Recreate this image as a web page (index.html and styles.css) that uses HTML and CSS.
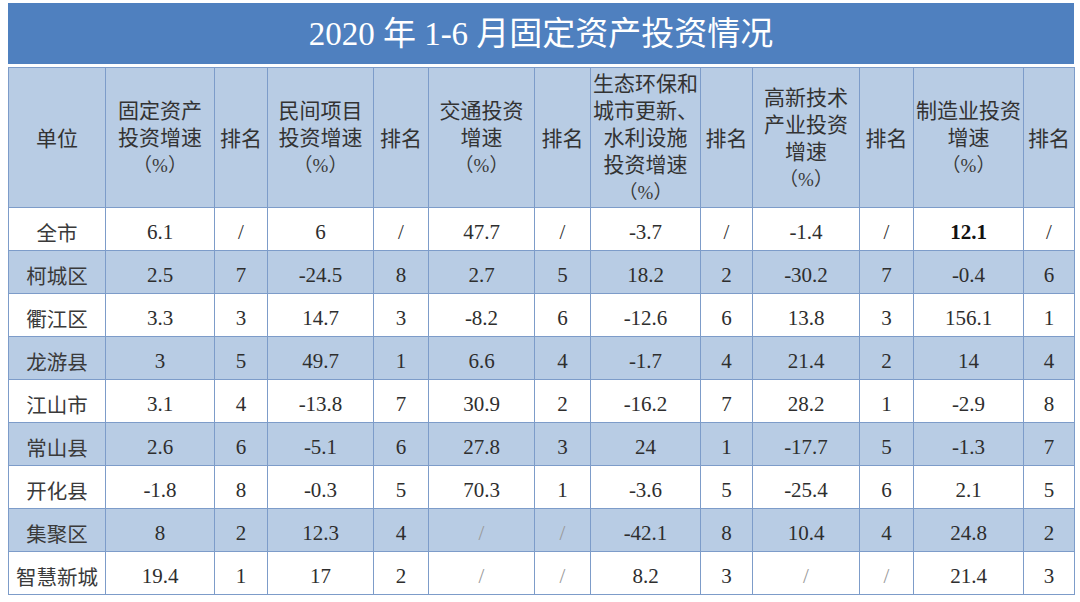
FILE: index.html
```html
<!DOCTYPE html>
<html lang="zh-CN">
<head>
<meta charset="utf-8">
<title>2020 年 1-6 月固定资产投资情况</title>
<link rel="stylesheet" href="styles.css">
</head>
<body>
<div class="sheet">
  <div class="title">2020 年 1-6 月固定资产投资情况</div>
  <table class="grid">
    <colgroup>
      <col class="c-unit"><col class="c-v1"><col class="c-r1"><col class="c-v2"><col class="c-r2"><col class="c-v3"><col class="c-r3"><col class="c-v4"><col class="c-r4"><col class="c-v5"><col class="c-r5"><col class="c-v6"><col class="c-r6">
    </colgroup>
    <thead>
      <tr class="head">
        <th>单位</th>
        <th>固定资产<br>投资增速<br><span class="pct">（%）</span></th>
        <th>排名</th>
        <th>民间项目<br>投资增速<br><span class="pct">（%）</span></th>
        <th>排名</th>
        <th>交通投资<br>增速<br><span class="pct">（%）</span></th>
        <th>排名</th>
        <th>生态环保和<br>城市更新、<br>水利设施<br>投资增速<br><span class="pct">（%）</span></th>
        <th>排名</th>
        <th>高新技术<br>产业投资<br>增速<br><span class="pct">（%）</span></th>
        <th>排名</th>
        <th>制造业投资<br>增速<br><span class="pct">（%）</span></th>
        <th>排名</th>
      </tr>
    </thead>
    <tbody>
      <tr><td class="name">全市</td><td>6.1</td><td>/</td><td>6</td><td>/</td><td>47.7</td><td>/</td><td>-3.7</td><td>/</td><td>-1.4</td><td>/</td><td class="bold">12.1</td><td>/</td></tr>
      <tr class="alt"><td class="name">柯城区</td><td>2.5</td><td>7</td><td>-24.5</td><td>8</td><td>2.7</td><td>5</td><td>18.2</td><td>2</td><td>-30.2</td><td>7</td><td>-0.4</td><td>6</td></tr>
      <tr><td class="name">衢江区</td><td>3.3</td><td>3</td><td>14.7</td><td>3</td><td>-8.2</td><td>6</td><td>-12.6</td><td>6</td><td>13.8</td><td>3</td><td>156.1</td><td>1</td></tr>
      <tr class="alt"><td class="name">龙游县</td><td>3</td><td>5</td><td>49.7</td><td>1</td><td>6.6</td><td>4</td><td>-1.7</td><td>4</td><td>21.4</td><td>2</td><td>14</td><td>4</td></tr>
      <tr><td class="name">江山市</td><td>3.1</td><td>4</td><td>-13.8</td><td>7</td><td>30.9</td><td>2</td><td>-16.2</td><td>7</td><td>28.2</td><td>1</td><td>-2.9</td><td>8</td></tr>
      <tr class="alt"><td class="name">常山县</td><td>2.6</td><td>6</td><td>-5.1</td><td>6</td><td>27.8</td><td>3</td><td>24</td><td>1</td><td>-17.7</td><td>5</td><td>-1.3</td><td>7</td></tr>
      <tr><td class="name">开化县</td><td>-1.8</td><td>8</td><td>-0.3</td><td>5</td><td>70.3</td><td>1</td><td>-3.6</td><td>5</td><td>-25.4</td><td>6</td><td>2.1</td><td>5</td></tr>
      <tr class="alt"><td class="name">集聚区</td><td>8</td><td>2</td><td>12.3</td><td>4</td><td class="na">/</td><td class="na">/</td><td>-42.1</td><td>8</td><td>10.4</td><td>4</td><td>24.8</td><td>2</td></tr>
      <tr><td class="name">智慧新城</td><td>19.4</td><td>1</td><td>17</td><td>2</td><td class="na">/</td><td class="na">/</td><td>8.2</td><td>3</td><td class="na">/</td><td class="na">/</td><td>21.4</td><td>3</td></tr>
    </tbody>
  </table>
</div>
</body>
</html>
```

FILE: styles.css
```css
html, body {
  margin: 0;
  padding: 0;
  background: #ffffff;
}

body {
  font-family: "Liberation Serif", "Noto Sans CJK SC", serif;
  color: #2e2e2e;
}

.sheet {
  width: 1066px;
  padding: 3px 0 0 8px;
}

.title {
  height: 61px;
  box-sizing: border-box;
  padding-top: 2px;
  background: #4f80bf;
  color: #ffffff;
  font-size: 33px;
  line-height: 59px;
  text-align: center;
  margin-bottom: 3px;
}

.grid {
  width: 1066px;
  border-collapse: collapse;
  table-layout: fixed;
}

.c-unit { width: 97px; }
.c-v1 { width: 109px; }
.c-r1 { width: 53px; }
.c-v2 { width: 106px; }
.c-r2 { width: 55px; }
.c-v3 { width: 106px; }
.c-r3 { width: 56px; }
.c-v4 { width: 110px; }
.c-r4 { width: 52px; }
.c-v5 { width: 107px; }
.c-r5 { width: 54px; }
.c-v6 { width: 110px; }
.c-r6 { width: 51px; }

.grid th,
.grid td {
  border: 1px solid #7d9cc9;
  padding: 0;
  text-align: center;
  vertical-align: middle;
  overflow: hidden;
  white-space: nowrap;
}

.head {
  height: 140px;
  background: #b8cce4;
}

.head th {
  font-family: "Noto Sans CJK SC", sans-serif;
  font-weight: normal;
  font-size: 21px;
  line-height: 27px;
  color: #333333;
}

.pct {
  font-family: "Liberation Serif", "Noto Sans CJK SC", serif;
  font-size: 19px;
  color: #3a3a3a;
}

.grid tbody tr {
  height: 43px;
  background: #ffffff;
}

.grid tbody tr.alt {
  background: #b8cce4;
}

.grid td {
  box-sizing: border-box;
  padding-top: 5px;
  font-size: 21px;
  line-height: 24px;
  color: #2e2e2e;
}

.grid td.name {
  font-family: "Noto Sans CJK SC", sans-serif;
  font-size: 20.5px;
  color: #3a3a3a;
}

.grid td.bold {
  font-weight: bold;
  color: #111111;
}

.grid td.na {
  color: #9a9a9a;
}
```
